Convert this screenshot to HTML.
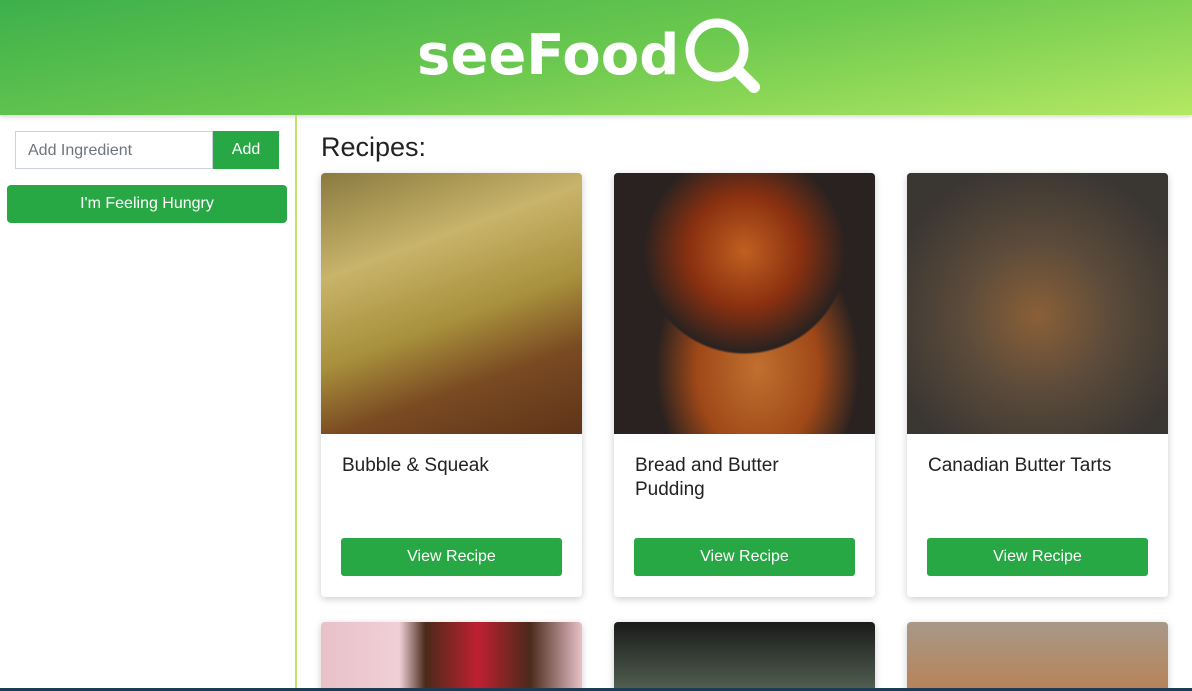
<!DOCTYPE html>
<html><head><meta charset="utf-8"><style>
*{box-sizing:border-box;margin:0;padding:0}
html,body{width:1192px;height:691px;overflow:hidden}
body{background:#fff;font-family:"Liberation Sans",Roboto,sans-serif;position:relative}
.wrap{position:absolute;left:0;top:0;width:1192px;height:691px;overflow:hidden}
.hdr{position:absolute;left:0;top:0;width:1192px;height:115px;background:linear-gradient(170deg,#3db04b 0%,#6cc94f 50%,#b4e862 100%);box-shadow:0 2px 4px rgba(0,0,0,.15)}
.logo{position:absolute;left:417px;top:24px;font-family:"DejaVu Sans",sans-serif;font-weight:bold;font-size:56px;color:#fff;line-height:64px}
.side{position:absolute;left:0;top:115px;width:297px;height:576px;border-right:2px solid #c2e46a}
.inp{position:absolute;left:15px;top:16px;width:198px;height:38px;border:1px solid #ccd2dc;font-size:16px;color:#6c757d;padding:10px 12px}
.add{position:absolute;left:213px;top:16px;width:66px;height:38px;background:#28a745;color:#fff;font-size:16px;text-align:center;line-height:38px}
.hungry{position:absolute;left:7px;top:70px;width:280px;height:38px;background:#28a745;color:#fff;border-radius:4px;text-align:center;line-height:38px;font-size:16px}
h2{position:absolute;left:321px;top:132px;font-weight:normal;font-size:27px;color:#222}
.card{position:absolute;width:261px;height:424px;border-radius:4px;box-shadow:0 2px 8px rgba(0,0,0,.2);overflow:hidden;background:#fff}
.img{height:261px}
.t{position:absolute;left:21px;top:281px;font-size:19px;color:#222;line-height:24px;width:200px}
.b{position:absolute;left:20px;top:365px;width:221px;height:38px;background:#28a745;color:#fff;border-radius:3px;text-align:center;line-height:38px;font-size:16px}
.bot{position:absolute;left:0;top:688px;width:1192px;height:3px;background:#1c3d55}
</style></head><body><div class="wrap">
<div class="hdr">
<div class="logo">seeFood</div>
<svg style="position:absolute;left:680px;top:14px" width="86" height="82"><circle cx="37" cy="36" r="27" fill="none" stroke="#fff" stroke-width="9"/><line x1="58" y1="57" x2="74" y2="73" stroke="#fff" stroke-width="12" stroke-linecap="round"/></svg>
</div>
<div class="side">
<div class="inp">Add Ingredient</div><div class="add">Add</div>
<div class="hungry">I'm Feeling Hungry</div>
</div>
<h2>Recipes:</h2>
<div class="card" style="left:321px;top:173px"><div class="img" style="background:linear-gradient(160deg,#8a7a40 0%,#c8b46a 30%,#a8903c 55%,#7a4a22 75%,#5e3418 100%)"></div><div class="t">Bubble &amp; Squeak</div><div class="b">View Recipe</div></div>
<div class="card" style="left:614px;top:173px"><div class="img" style="background:radial-gradient(circle at 50% 30%,#c06020 0,#8a3010 25%,#2a2220 45%,transparent 46%),radial-gradient(ellipse at 55% 75%,#c07030 0,#a04818 30%,#2a2220 50%),#1e1e1e"></div><div class="t">Bread and Butter Pudding</div><div class="b">View Recipe</div></div>
<div class="card" style="left:907px;top:173px"><div class="img" style="background:radial-gradient(circle at 50% 55%,#8a6038 0,#5a4a3a 40%,#3a3632 80%),#3a3632"></div><div class="t">Canadian Butter Tarts</div><div class="b">View Recipe</div></div>
<div class="card" style="left:321px;top:622px"><div class="img" style="background:linear-gradient(90deg,#e8c0c8 0,#f0d0d8 30%,#4a2a1a 40%,#c02030 60%,#4a2a1a 80%,#e8c0c8 100%)"></div></div>
<div class="card" style="left:614px;top:622px"><div class="img" style="background:linear-gradient(180deg,#1a1a1a 0,#5a6a5a 30%,#c09060 60%)"></div></div>
<div class="card" style="left:907px;top:622px"><div class="img" style="background:linear-gradient(180deg,#a89888 0,#c07840 40%,#a05020 100%)"></div></div>
<div class="bot"></div>
</div></body></html>
